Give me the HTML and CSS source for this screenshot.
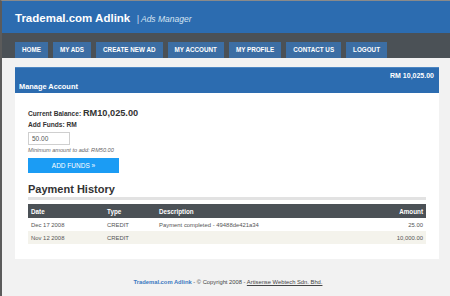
FILE: index.html
```html
<!DOCTYPE html>
<html lang="en">
<head>
    <meta charset="UTF-8">
    <title>Trademal.com Adlink | Ads Manager</title>
    <link rel="stylesheet" href="styles.css">
</head>
<body>

    <div class="header">
        <span class="logo">Trademal.com Adlink</span>
        <span class="tagline">| Ads Manager</span>
    </div>

    <div class="nav">
        <a href="#" class="tab">HOME</a>
        <a href="#" class="tab">MY ADS</a>
        <a href="#" class="tab">CREATE NEW AD</a>
        <a href="#" class="tab">MY ACCOUNT</a>
        <a href="#" class="tab">MY PROFILE</a>
        <a href="#" class="tab">CONTACT US</a>
        <a href="#" class="tab">LOGOUT</a>
    </div>

    <div class="panel">
        <div class="panel-head">
            <div class="head-balance">RM 10,025.00</div>
            <div class="head-title">Manage Account</div>
        </div>

        <div class="panel-body">
            <div class="balance">Current Balance: <span class="balance-value">RM10,025.00</span></div>
            <div class="label">Add Funds: RM</div>
            <input type="text" class="amount" value="50.00">
            <div class="hint">Minimum amount to add: RM50.00</div>
            <button class="btn-add">ADD FUNDS &raquo;</button>

            <h2 class="section-title">Payment History</h2>
            <table class="history">
                <tr>
                    <th class="col-date">Date</th>
                    <th class="col-type">Type</th>
                    <th>Description</th>
                    <th class="num">Amount</th>
                </tr>
                <tr>
                    <td>Dec 17 2008</td>
                    <td>CREDIT</td>
                    <td>Payment completed - 49488de421a34</td>
                    <td class="num">25.00</td>
                </tr>
                <tr class="alt">
                    <td>Nov 12 2008</td>
                    <td>CREDIT</td>
                    <td></td>
                    <td class="num">10,000.00</td>
                </tr>
            </table>
        </div>
    </div>

    <div class="footer">
        <a href="#" class="footer-brand">Trademal.com Adlink</a> - &copy; Copyright 2008 - <a href="#" class="footer-company">Artisense Webtech Sdn. Bhd.</a>
    </div>

</body>
</html>
```

FILE: styles.css
```css
body {
    margin: 0;
    font-family: "Liberation Sans", Arial, sans-serif;
    background-color: #f2f2f2;
    color: #333;
    border-top: 1px solid #8a8a8a;
    border-left: 2px solid #5b5b5b;
    min-height: 295px;
}
.header {
    height: 32px;
    line-height: 32px;
    background-color: #2c6cb0;
    padding-left: 13px;
    color: #fff;
}
.logo {
    font-size: 11.5px;
    font-weight: bold;
}
.tagline {
    font-size: 8.5px;
    font-style: italic;
    color: #d6e4f2;
    margin-left: 2px;
}
.nav {
    height: 25px;
    background-color: #4b5156;
    display: flex;
    align-items: flex-end;
    gap: 5px;
    padding-left: 13px;
}
.tab {
    height: 16px;
    line-height: 16px;
    padding: 0 7px;
    background-color: #3c6ea4;
    color: #fff;
    font-size: 6.3px;
    font-weight: bold;
    text-decoration: none;
}
.panel {
    margin: 9px 11px 0 13px;
    background: #fff;
    padding-bottom: 15px;
}
.panel-head {
    height: 26px;
    background-color: #2c6cb0;
    border-top: 1px solid #4d86c2;
    box-sizing: border-box;
    color: #fff;
    font-weight: bold;
    padding: 3px 5px 0 4px;
    display: flex;
    flex-direction: column;
}
.head-balance {
    text-align: right;
    font-size: 7px;
    line-height: 9px;
}
.head-title {
    font-size: 7.4px;
    line-height: 10px;
    margin-top: 2px;
}
.panel-body {
    padding: 15px 13px 0 13px;
}
.balance {
    font-size: 6.6px;
    font-weight: bold;
    line-height: 11px;
}
.balance-value {
    font-size: 9.2px;
}
.label {
    font-size: 6.6px;
    font-weight: bold;
    line-height: 9px;
    margin-top: 1px;
}
.amount {
    display: block;
    width: 42px;
    height: 13px;
    box-sizing: border-box;
    border: 1px solid #cfcfcf;
    margin-top: 3px;
    padding: 0 3px;
    font-family: "Liberation Sans", Arial, sans-serif;
    font-size: 6.5px;
    color: #555;
}
.hint {
    font-size: 5.6px;
    font-style: italic;
    color: #666;
    margin-top: 1px;
    line-height: 8px;
}
.btn-add {
    display: block;
    width: 91px;
    height: 15px;
    margin-top: 4px;
    border: none;
    background-color: #1b9cf4;
    color: #fff;
    font-family: "Liberation Sans", Arial, sans-serif;
    font-size: 6.5px;
    padding: 0;
}
.section-title {
    font-size: 11px;
    font-weight: bold;
    color: #333;
    margin: 10px 0 0 0;
    line-height: 13px;
    padding-bottom: 1px;
    border-bottom: 3px solid #e2e2e2;
}
.history {
    width: 100%;
    border-collapse: collapse;
    margin-top: 4px;
    font-size: 5.9px;
    color: #555;
}
.history th {
    background-color: #4b5156;
    color: #fff;
    font-weight: bold;
    text-align: left;
    height: 14px;
    padding: 0 3px;
    font-size: 6.3px;
}
.history td {
    height: 13px;
    padding: 0 3px;
}
.history .num {
    text-align: right;
}
.history .alt td {
    background-color: #f4f3ec;
}
.col-date {
    width: 70px;
}
.col-type {
    width: 46px;
}
.footer {
    text-align: center;
    font-size: 5.8px;
    color: #444;
    margin-top: 20px;
    padding-left: 4px;
}
.footer-brand {
    color: #3a78c0;
    font-weight: bold;
    text-decoration: none;
}
.footer-company {
    color: #444;
}
```
